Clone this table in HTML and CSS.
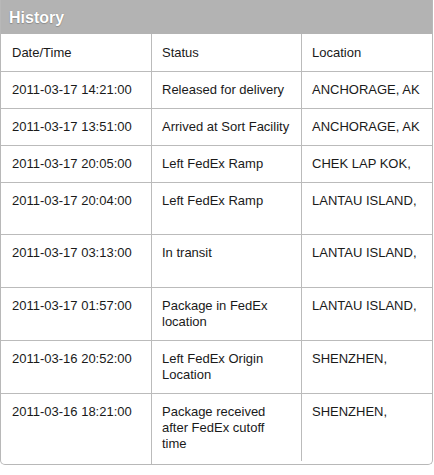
FILE: index.html
```html
<!DOCTYPE html>
<html>
<head>
<meta charset="utf-8">
<link rel="stylesheet" href="styles.css">
</head>
<body>
<div class="box">
  <div class="title">History</div>
  <div class="row head">
    <div class="cell">Date/Time</div>
    <div class="cell">Status</div>
    <div class="cell">Location</div>
  </div>
  <div class="row r37">
    <div class="cell">2011-03-17 14:21:00</div>
    <div class="cell">Released for delivery</div>
    <div class="cell">ANCHORAGE, AK</div>
  </div>
  <div class="row r37">
    <div class="cell">2011-03-17 13:51:00</div>
    <div class="cell">Arrived at Sort Facility</div>
    <div class="cell">ANCHORAGE, AK</div>
  </div>
  <div class="row r37">
    <div class="cell">2011-03-17 20:05:00</div>
    <div class="cell">Left FedEx Ramp</div>
    <div class="cell">CHEK LAP KOK,</div>
  </div>
  <div class="row r52">
    <div class="cell">2011-03-17 20:04:00</div>
    <div class="cell">Left FedEx Ramp</div>
    <div class="cell">LANTAU ISLAND,</div>
  </div>
  <div class="row r53">
    <div class="cell">2011-03-17 03:13:00</div>
    <div class="cell">In transit</div>
    <div class="cell">LANTAU ISLAND,</div>
  </div>
  <div class="row r53">
    <div class="cell">2011-03-17 01:57:00</div>
    <div class="cell">Package in FedEx location</div>
    <div class="cell">LANTAU ISLAND,</div>
  </div>
  <div class="row r53">
    <div class="cell">2011-03-16 20:52:00</div>
    <div class="cell">Left FedEx Origin Location</div>
    <div class="cell">SHENZHEN,</div>
  </div>
  <div class="row last">
    <div class="cell">2011-03-16 18:21:00</div>
    <div class="cell">Package received after FedEx cutoff time</div>
    <div class="cell">SHENZHEN,</div>
  </div>
</div>
</body>
</html>
```
FILE: styles.css
```css
html, body {
  margin: 0;
  padding: 0;
  background: #ffffff;
}
body {
  font-family: "Liberation Sans", Arial, Helvetica, sans-serif;
  font-size: 13px;
  color: #1a1a1a;
}
.box {
  width: 431px;
  border: 1px solid #b8b8b8;
  border-top: none;
  border-radius: 0 0 5px 5px;
  overflow: hidden;
}
.title {
  height: 34px;
  box-sizing: border-box;
  background: #b3b3b3;
  color: #ffffff;
  font-weight: bold;
  font-size: 16px;
  line-height: 20px;
  padding: 8px 0 0 8px;
  margin-right: -1px;
  text-shadow: 0 0 1px rgba(0,0,0,0.25), 0 1px 1px rgba(0,0,0,0.2);
}
.row {
  display: grid;
  grid-template-columns: 151px 150px 1fr;
  border-bottom: 1px solid #bbbbbb;
  box-sizing: border-box;
}
.row.last {
  border-bottom: none;
  height: 70px;
}
.head { height: 38px; }
.r37 { height: 37px; }
.r52 { height: 52px; }
.r53 { height: 53px; }
.cell {
  padding: 10px 11px 0 10px;
  line-height: 16px;
  border-right: 1px solid #bbbbbb;
}
.cell:first-child {
  padding-left: 11px;
}
.cell:last-child {
  border-right: none;
}
.head .cell {
  padding-top: 11px;
}
.row.last .cell:nth-child(2) {
  margin-bottom: 3px;
}
```
